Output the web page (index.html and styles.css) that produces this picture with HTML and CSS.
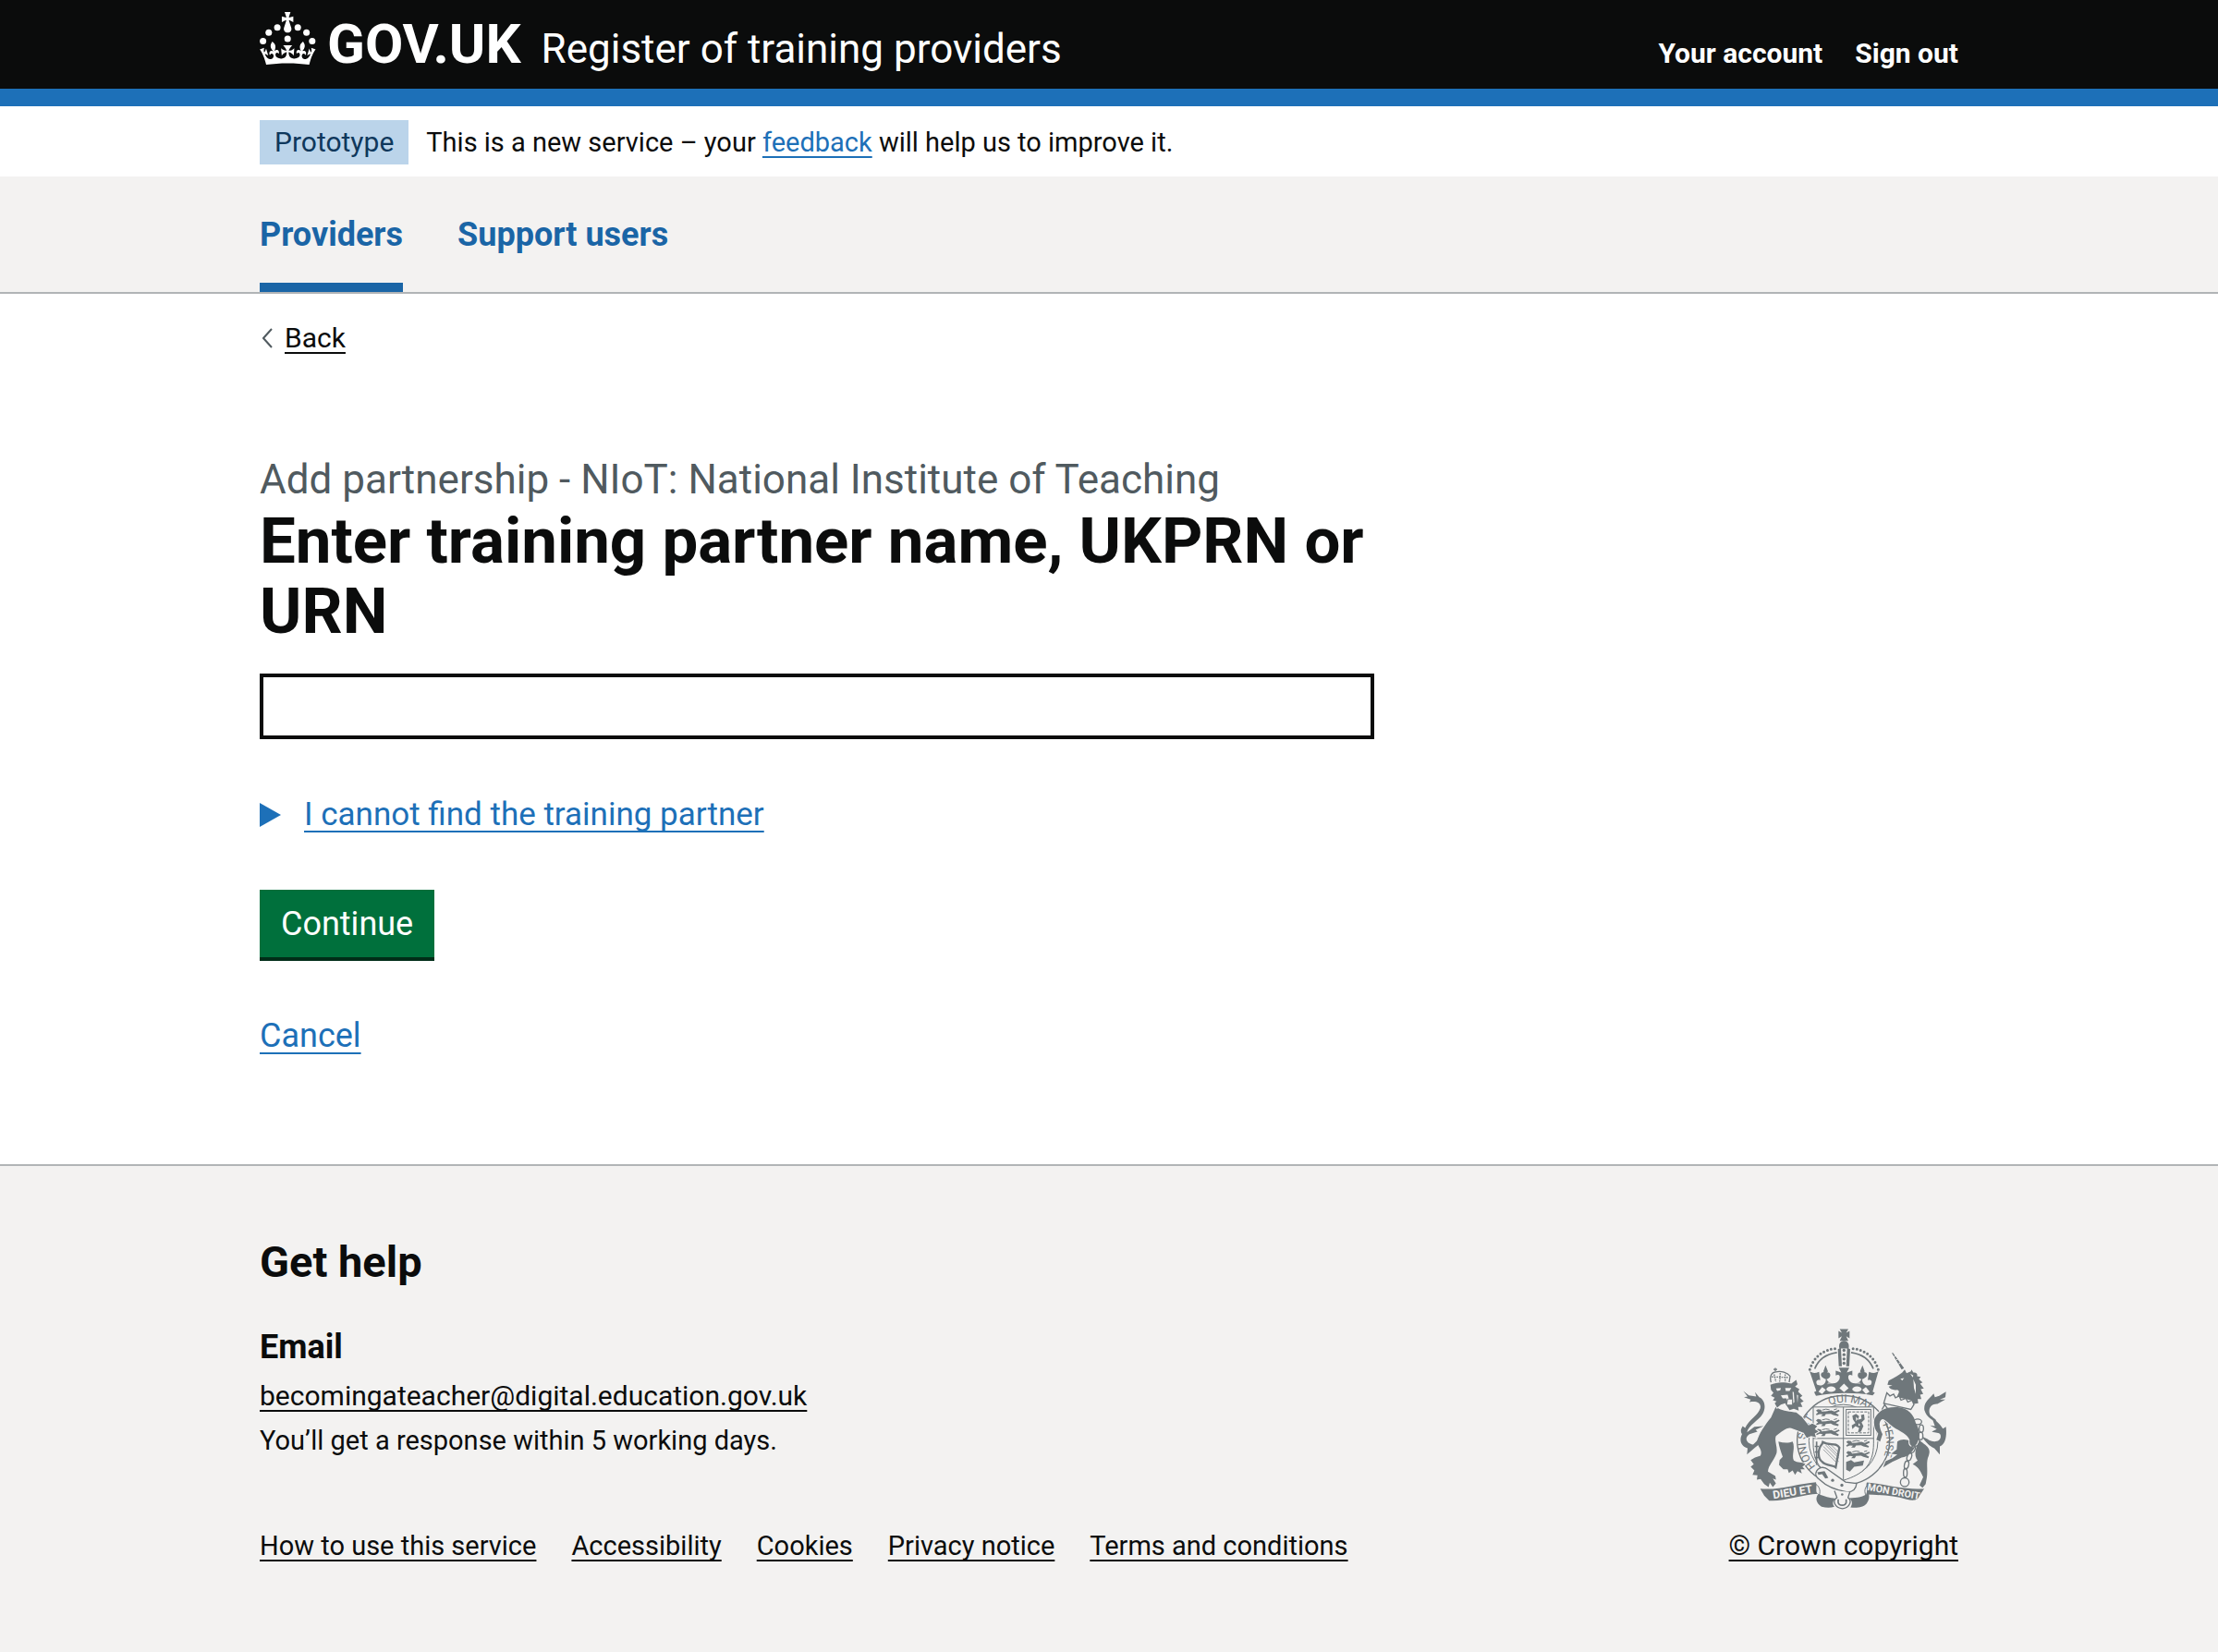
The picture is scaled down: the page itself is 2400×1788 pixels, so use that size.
FILE: index.html
```
<!DOCTYPE html>
<html lang="en">
<head>
<meta charset="utf-8">
<meta name="viewport" content="width=device-width, initial-scale=1">
<title>Enter training partner name, UKPRN or URN - Register of training providers - GOV.UK</title>
<link rel="stylesheet" href="styles.css">
</head>
<body>
<header class="header">
  <div class="container header-row">
    <a class="brand" href="#">
      <svg class="crown" viewBox="0 0 64 60" aria-hidden="true" fill="currentColor">
        <circle cx="20" cy="17.6" r="3.7"/><circle cx="10.2" cy="23.5" r="3.7"/><circle cx="3.7" cy="33.2" r="3.7"/><circle cx="31.7" cy="30.6" r="3.7"/><circle cx="43.3" cy="17.6" r="3.7"/><circle cx="53.2" cy="23.5" r="3.7"/><circle cx="59.7" cy="33.2" r="3.7"/>
        <path d="M33.1,9.8c.2-.1.3-.3.5-.5l4.6,2.4v-6.8l-4.6,1.5c-.1-.2-.3-.3-.5-.5l1.9-5.9h-6.7l1.9,5.9c-.2.1-.3.3-.5.5l-4.6-1.5v6.8l4.6-2.4c.1.2.3.3.5.5l-2.6,8c-.9,2.8,1.2,5.7,4.1,5.7h0c3,0,5.1-2.9,4.1-5.7l-2.6-8ZM37,37.9s-3.4,3.8-4.1,6.1c2.2,0,4.2-.5,6.4-2.8l-.7,8.5c-2-2.8-4.4-4.1-5.7-3.8.1,3.1.5,6.7,5.8,7.2,3.7.3,6.7-1.5,7-3.8.4-2.6-2-4.3-3.7-1.6-1.4-4.5,2.4-6.1,4.9-3.2-1.9-4.5-1.8-7.7,2.4-10.9,3,4,2.6,7.3-1.2,11.1,2.4-1.3,6.2,0,4,4.6-1.2-2.8-3.7-2.2-4.2.2-.3,1.7.7,3.7,3,4.2,1.9.3,4.7-.9,7-5.9-1.3,0-2.4.7-3.9,1.7l2.4-8c.6,2.3,1.4,3.7,2.2,4.5.6-1.6.5-2.8,0-5.3l5,1.8c-2.6,3.6-5.2,8.7-7.3,17.5-7.4-1.1-15.7-1.7-24.5-1.7h0c-8.8,0-17.1.6-24.5,1.7-2.1-8.9-4.7-13.9-7.3-17.5l5-1.8c-.5,2.5-.6,3.7,0,5.3.8-.8,1.6-2.3,2.2-4.5l2.4,8c-1.5-1-2.6-1.7-3.9-1.7,2.3,5,5.2,6.2,7,5.9,2.3-.4,3.3-2.4,3-4.2-.5-2.4-3-3.1-4.2-.2-2.2-4.6,1.6-6,4-4.6-3.7-3.7-4.2-7.1-1.2-11.1,4.2,3.2,4.3,6.4,2.4,10.9,2.5-2.8,6.3-1.3,4.9,3.2-1.8-2.7-4.1-1-3.7,1.6.3,2.3,3.3,4.1,7,3.8,5.4-.5,5.7-4.2,5.8-7.2-1.3-.2-3.7,1-5.7,3.8l-.7-8.5c2.2,2.3,4.2,2.7,6.4,2.8-.7-2.3-4.1-6.1-4.1-6.1h10.6,0Z"/>
      </svg>
      <span class="wordmark">GOV.UK</span>
      <span class="service">Register of training providers</span>
    </a>
    <nav class="account" aria-label="Account">
      <a href="#">Your account</a>
      <a href="#">Sign out</a>
    </nav>
  </div>
</header>

<div class="container phase">
  <strong class="tag">Prototype</strong>
  <span class="phase-text">This is a new service – your <a class="link" href="#">feedback</a> will help us to improve it.</span>
</div>

<nav class="service-nav" aria-label="Service">
  <div class="container service-nav-row">
    <a class="nav-link nav-link-active" href="#" aria-current="page">Providers</a>
    <a class="nav-link" href="#">Support users</a>
  </div>
</nav>

<div class="container content">
  <a class="back" href="#"><svg class="back-arrow" viewBox="0 0 11 22" aria-hidden="true"><path d="M10 1 1 11l9 10" fill="none" stroke="currentColor" stroke-width="2"/></svg><span class="back-text">Back</span></a>
  <main class="main">
    <form class="form" action="#">
      <span class="caption">Add partnership - NIoT: National Institute of Teaching</span>
      <h1 class="title"><label for="partner">Enter training partner name, UKPRN or URN</label></h1>
      <input class="input" id="partner" name="partner" type="text" autocomplete="off">
      <details class="details">
        <summary class="summary"><span class="summary-text">I cannot find the training partner</span></summary>
        <p class="details-text">Contact support if the training partner is not listed.</p>
      </details>
      <button class="button" type="submit">Continue</button>
      <p class="cancel"><a class="link" href="#">Cancel</a></p>
    </form>
  </main>
</div>

<footer class="footer">
  <div class="container footer-row">
    <div class="footer-main">
      <h2 class="footer-title">Get help</h2>
      <h3 class="footer-subtitle">Email</h3>
      <ul class="footer-list">
        <li class="footer-email"><a class="footer-link" href="#">becomingateacher@digital.education.gov.uk</a></li>
        <li>You’ll get a response within 5 working days.</li>
      </ul>
      <ul class="footer-links">
        <li><a class="footer-link" href="#">How to use this service</a></li>
        <li><a class="footer-link" href="#">Accessibility</a></li>
        <li><a class="footer-link" href="#">Cookies</a></li>
        <li><a class="footer-link" href="#">Privacy notice</a></li>
        <li><a class="footer-link" href="#">Terms and conditions</a></li>
      </ul>
    </div>
    <div class="copyright">
      <svg class="arms" viewBox="130 55 672 590" aria-hidden="true" fill="currentColor">
        <defs>
          <path id="ring-left" d="M375 505A124 122 0 0 1 402 318"/>
          <path id="ring-top" d="M420 306A140 140 0 0 1 560 330"/>
          <path id="ring-right" d="M575 345A124 122 0 0 1 500 545"/>
          <g id="passant"><path d="M2 6 8 1 18 3 21 9 34 8 52 5 62 9 76 3 79 7 66 14 76 19 74 24 58 20 50 16 34 17 30 24 18 24 24 18 14 17 4 21 2 17 9 12Z"/><path d="M22 4 34 1 46 3M60 3 70 0" fill="none" stroke="currentColor" stroke-width="3"/></g>
        </defs>

        <!-- crown -->
        <path d="M453 59H481L474 71 485 65V89L474 82 481 97H453L460 82 449 89V65L460 71Z"/>
        <path d="M452 122C448 104 458 97 467 97S486 104 482 122L487 124 484 180H474L477 122H457L460 180H450L447 124Z"/>
        <g><circle cx="467" cy="128" r="5"/><circle cx="467" cy="142" r="5"/><circle cx="467" cy="156" r="5"/><circle cx="467" cy="170" r="5"/></g>
        <path d="M356 190C368 150 400 124 444 122M578 190C566 150 534 124 490 122" fill="none" stroke="currentColor" stroke-width="9" stroke-linecap="round" stroke-dasharray="0 12.5"/>
        <path d="M372 188C384 156 410 140 444 135M562 188C550 156 524 140 490 135" fill="none" stroke="currentColor" stroke-width="5"/>
        <path d="M355 195C362 202 372 204 386 198L390 225C378 222 374 230 380 240C394 246 408 240 408 222C392 216 388 206 396 200C404 196 408 200 408 206L400 196 407 177 415 196 408 206C410 198 420 198 422 206C424 214 418 220 410 222C420 240 444 240 452 222C456 210 450 204 440 210V194L458 200 450 184H484L476 200 494 194V210C484 204 478 210 482 222C490 240 514 240 524 222C516 220 510 214 512 206C514 198 524 198 526 206L519 196 527 177 534 196 526 206C526 200 530 196 538 200C546 206 542 216 526 222C526 240 540 246 554 240C560 230 556 222 544 225L548 198C562 204 572 202 579 195L560 262 567 266 560 274C500 264 434 264 376 276L370 264 377 260Z"/>
        <g class="arms-cut">
          <path d="M467 236 482 251 467 264 452 251ZM396 247 408 256 396 270 384 262ZM538 247 550 262 538 270 526 256Z"/>
          <ellipse cx="425" cy="254" rx="15" ry="9"/><ellipse cx="509" cy="254" rx="15" ry="9"/>
          <path d="M412 238 430 205 440 226 430 236ZM522 238 504 205 494 226 504 236Z" opacity=".45"/>
        </g>

        <!-- garter -->
        <ellipse class="arms-paper" cx="465" cy="420" rx="150" ry="145" stroke="currentColor" stroke-width="4"/>
        <ellipse cx="465" cy="422" rx="112" ry="118" fill="none" stroke="currentColor" stroke-width="3"/>
        <g class="arms-motto">
          <text font-size="36"><textPath href="#ring-left">HONI SOIT</textPath></text>
          <text font-size="36"><textPath href="#ring-top">QUI MAL</textPath></text>
          <text font-size="34"><textPath href="#ring-right">Y PENSE</textPath></text>
        </g>

        <!-- shield -->
        <path class="arms-paper" d="M367 312H563V430C563 500 530 530 465 550C400 530 367 500 367 430Z"/>
        <g fill="none" stroke="currentColor" stroke-width="3">
          <path d="M367 312H563V430C563 500 530 530 465 550C400 530 367 500 367 430Z"/>
          <path d="M465 312V548M367 414H563"/>
          <rect x="474" y="320" width="80" height="84"/><rect x="481" y="328" width="66" height="68" stroke-dasharray="9 4"/>
          <path d="M400 440 450 490M400 450 440 490M408 436 450 478M416 436 450 470M424 434 450 460" stroke-width="2"/>
          <path d="M396 432C380 450 382 480 396 490C410 504 430 500 440 508L452 444C440 424 420 440 398 426Z" stroke-width="7"/>
          <path d="M378 424V500M372 440H386M372 458H386M372 476H386M392 512 420 520" stroke-width="5"/>
        </g>
        <use href="#passant" x="374" y="318"/><use href="#passant" x="374" y="350"/><use href="#passant" x="374" y="382"/>
        <use href="#passant" x="472" y="420"/><use href="#passant" x="472" y="454"/>
        <path d="M474 490 490 484 500 492 532 486 528 502 500 506 486 522 474 516Z"/>
        <path d="M494 340 506 334 516 342 512 354 524 350 522 338 532 336 534 352 524 362 530 374 522 392 512 394 516 380 504 374 494 384 492 372 504 364 496 352Z"/>
        <path class="arms-cut" d="M506 344 512 350 506 358ZM514 364 520 370 514 374Z"/>

        <!-- belt and buckle -->
        <g class="arms-paper" stroke="currentColor" stroke-width="4">
          <path d="M378 520C388 504 404 506 416 516L472 556 508 560C506 578 496 588 478 588C440 582 410 570 388 548C376 540 372 530 378 520Z"/>
          <path d="M436 584 444 606C428 616 436 640 462 642C486 640 494 616 480 606L486 588"/>
        </g>
        <g><circle cx="430" cy="550" r="5"/><circle cx="460" cy="566" r="5"/><circle cx="461" cy="596" r="4"/><path d="M380 524 404 520 416 542 406 544 396 530 384 532Z"/></g>
        <path d="M448 612V622C450 634 472 634 474 622V612" fill="none" stroke="currentColor" stroke-width="5"/>

        <!-- ribbon -->
        <path d="M195 577C250 584 320 560 376 556C380 574 372 590 384 594C330 596 270 620 224 616L208 600Z"/>
        <path d="M541 557C600 562 660 582 727 577L712 600C706 618 690 616 670 612C630 600 590 598 538 596C546 584 536 570 541 557Z"/>
        <path d="M384 594C374 606 374 622 394 636C410 640 424 640 436 636C428 626 430 616 440 610C420 606 404 604 384 594ZM546 590C530 606 510 606 484 608C496 618 494 628 488 638C510 640 530 638 540 626C550 612 550 602 546 590Z"/>
        <path d="M374 562C390 570 392 590 384 604M548 562C532 572 532 590 540 602" fill="none" stroke="currentColor" stroke-width="3"/>
        <g class="arms-scroll">
          <text x="238" y="610" font-size="36" transform="rotate(-9 238 610)">DIEU ET</text>
          <text x="541" y="582" font-size="32" transform="rotate(10 541 582)">MON DROIT</text>
        </g>

        <!-- lion -->
        <path d="M244 185V196M238 190H250M230 232C224 210 234 198 246 198C262 194 284 200 292 212L288 238" fill="none" stroke="currentColor" stroke-width="4"/>
        <path d="M232 214 288 216M240 206 246 230M260 202 258 232M276 206 276 232" fill="none" stroke="currentColor" stroke-width="4" stroke-dasharray="5 3"/>
        <g class="arms-beast">
          <path d="M254 424C270 428 286 430 300 424C310 444 296 468 304 486C316 494 330 490 342 498L332 506 340 514 326 514 330 528 316 520 308 532 300 518 288 526 284 514 270 514 256 500 258 484 268 474C262 456 256 440 254 424Z"/>
          <path d="M246 310C262 326 290 326 312 330L330 344 352 372 364 366 380 374 372 384 384 392 372 398 376 410 360 406 346 412 336 396 300 382C284 374 264 392 246 406C240 424 252 440 248 462C238 490 222 500 220 522L244 536 246 548 236 544 246 560 236 572 226 558 222 572 208 562 196 546 184 548 186 534 170 532 176 518 164 506 174 498 164 484 178 476 196 470C204 450 186 440 184 424C190 400 210 370 230 346Z"/>
          <path d="M228 240C250 230 270 230 296 236L312 224 316 238 308 246 322 254 318 262 332 276 324 282 336 294 326 298 332 312 318 312 320 324 304 318 290 322 276 300 262 304 250 314 242 300 248 294 236 290 242 282 230 276 238 266 230 256Z"/>
        </g>
        <path class="arms-cut" d="M246 252 262 250 260 258 250 260ZM276 250 296 250 290 260 278 260ZM262 274 284 272 290 292 286 302 280 284 268 284ZM300 262 304 264 306 296 302 300ZM314 272 318 274 316 300Z"/>
        <path class="arms-paper" d="M284 286H300V306H280Z" stroke="currentColor" stroke-width="3"/>
        <path d="M140 260 158 274 182 278 178 264 192 280C212 290 214 316 202 336C190 356 156 372 152 394L176 376 206 374 180 386 186 392 160 400C142 412 150 430 172 434L194 412 198 428 178 444 152 466 154 446C132 438 126 420 136 400C130 392 132 384 138 374L146 380C158 352 196 334 196 310C194 296 180 292 160 296L164 288 142 280 154 278Z"/>

        <!-- unicorn -->
        <path d="M622 136 626 136 662 186 654 190Z"/>
        <path class="arms-notch" d="M628 150 636 144M636 160 644 154M644 172 652 166"/>
        <g class="arms-beast">
          <path d="M640 424C660 410 686 420 700 438C690 456 676 476 654 476C636 484 614 494 594 508L602 488 624 478 640 466 620 464 638 450Z"/>
          <path d="M712 420C730 436 752 444 742 470C732 490 740 512 736 540L732 562 722 574 712 566 724 540C716 522 710 508 690 498L706 486C692 470 700 440 712 420Z"/>
          <path d="M566 350C580 322 606 308 650 314C680 320 694 340 700 364C716 390 714 410 704 430C696 446 676 440 680 420C674 400 650 392 626 376C606 362 600 350 590 352C576 360 584 386 592 400L584 424 572 418 578 398C566 386 562 366 566 350Z"/>
          <path d="M612 226C630 218 646 208 656 200L664 190 670 202 684 196 686 190 692 200C704 200 706 206 704 212L716 214 710 222 722 232 714 236 726 252 716 254 724 270 714 272 718 286 706 286 708 300 694 302 684 290 640 280C640 268 652 262 640 256C628 258 618 256 612 246L624 242 608 240Z"/>
        </g>
        <path class="arms-cut" d="M650 220 662 218 656 226ZM692 222 700 240 700 270 694 250ZM682 204 692 210 690 216Z"/>
        <path class="arms-paper" d="M606 266 616 276 628 270 634 282 646 276 652 290 668 284 674 296 688 290 694 304 684 320 596 300ZM590 320 602 300M596 300 610 320" stroke="currentColor" stroke-width="4"/>
        <path d="M798 262 796 280 778 288 796 288 770 302C750 300 736 320 748 340L764 352 770 364C756 356 734 344 728 322C724 296 746 284 758 268L762 280 776 276ZM750 340C768 360 778 366 788 382L798 376C800 400 800 430 778 440L778 466 760 446C744 440 730 424 720 408L738 416C756 430 786 426 780 402C776 394 764 396 752 392L768 384 746 372 762 374Z"/>
        <g class="arms-chain"><ellipse cx="706" cy="360" rx="13" ry="9"/><ellipse cx="718" cy="382" rx="7" ry="12"/><ellipse cx="716" cy="406" rx="7" ry="12"/><ellipse cx="704" cy="428" rx="7" ry="12" transform="rotate(30 704 428)"/><ellipse cx="690" cy="450" rx="7" ry="12" transform="rotate(25 690 450)"/><ellipse cx="679" cy="474" rx="7" ry="13" transform="rotate(20 679 474)"/><ellipse cx="670" cy="500" rx="7" ry="13" transform="rotate(12 670 500)"/><ellipse cx="666" cy="526" rx="6" ry="14"/><circle cx="664" cy="556" r="14"/></g>
      </svg>
      <a class="footer-link" href="#">© Crown copyright</a>
    </div>
  </div>
</footer>
</body>
</html>
```
FILE: styles.css
```
:root {
  --ink: #0b0c0c;
  --blue: #1d70b8;
  --blue-nav: #1a65a6;
  --grey: #f3f2f1;
  --rule: #b1b4b6;
  --secondary: #505a5f;
}

* { box-sizing: border-box; }

body {
  margin: 0;
  min-height: 100vh;
  display: flex;
  flex-direction: column;
  background: #fff;
  color: var(--ink);
  font-family: Roboto, "Liberation Sans", sans-serif;
  font-size: 36px;
  line-height: 48px;
}

h1, h2, h3, p, ul { margin: 0; padding: 0; }
ul { list-style: none; }
a {
  text-decoration-thickness: 2px;
  text-underline-offset: 5px;
  text-decoration-skip-ink: none;
}

.container {
  width: calc(100% - 58px);
  max-width: 1838px;
  margin: 0 auto;
}

.link { color: var(--blue); }

/* Header */
.header {
  background: var(--ink);
  color: #fff;
  border-bottom: 19px solid var(--blue);
}
.header-row {
  display: flex;
  justify-content: space-between;
  align-items: baseline;
}
.header a { color: #fff; text-decoration: none; }
.brand { display: flex; align-items: baseline; }
.crown {
  width: 61px;
  height: 57px;
  align-self: flex-start;
  margin: 13px 12px 0 0;
}
.wordmark { font-size: 60px; font-weight: 700; line-height: 96px; }
.service { margin-left: 22px; font-size: 44px; }
.account {
  display: flex;
  gap: 35px;
  font-size: 30px;
  font-weight: 700;
}

/* Phase banner */
.phase {
  display: flex;
  align-items: flex-start;
  gap: 19px;
  padding: 15px 0 13px;
  font-size: 29px;
}
.tag {
  padding: 0 16px;
  background: #bbd4ea;
  color: #0f385c;
  font-size: 30px;
  font-weight: 400;
}

/* Service navigation */
.service-nav {
  background: var(--grey);
  border-bottom: 2px solid var(--rule);
}
.service-nav-row { display: flex; gap: 59px; }
.nav-link {
  padding: 39px 0 28px;
  border-bottom: 10px solid transparent;
  color: var(--blue-nav);
  font-weight: 700;
  text-decoration: none;
}
.nav-link-active { border-bottom-color: var(--blue-nav); }

/* Content */
.content { padding: 29px 0 115px; }
.back {
  display: flex;
  align-items: center;
  gap: 13px;
  width: fit-content;
  padding-left: 3px;
  color: var(--ink);
  font-size: 30px;
  line-height: 38px;
  text-decoration: none;
}
.back-arrow { width: 11px; height: 22px; color: var(--secondary); }
.back-text {
  text-decoration: underline 2px;
  text-underline-offset: 5px;
}
.main { padding-top: 105px; }
.form { width: calc(66.66% - 19px); }
.caption {
  display: block;
  color: var(--secondary);
  font-size: 44px;
  line-height: 58px;
}
.title { font-size: 69px; line-height: 76px; }
.input {
  display: block;
  width: 100%;
  height: 71px;
  margin-top: 29px;
  padding: 8px;
  border: 4px solid var(--ink);
  border-radius: 0;
  background: #fff;
  color: var(--ink);
  font: inherit;
}
.details { margin-top: 58px; }
.summary {
  display: flex;
  align-items: center;
  gap: 25px;
  width: fit-content;
  color: var(--blue);
  font-size: 35px;
  cursor: pointer;
  list-style: none;
}
.summary::before {
  content: "";
  width: 23px;
  height: 26px;
  background: currentColor;
  clip-path: polygon(0 0, 100% 50%, 0 100%);
}
.summary-text {
  text-decoration: underline 2px;
  text-underline-offset: 6px;
  text-decoration-skip-ink: none;
}
.details-text { padding: 20px 48px; }
.button {
  display: block;
  margin-top: 57px;
  padding: 13px 23px 12px;
  border: 0;
  border-radius: 0;
  background: #00703c;
  box-shadow: 0 4px 0 #002d18;
  color: #fff;
  font: inherit;
}
.cancel { margin-top: 61px; }
.cancel .link { text-underline-offset: 6px; }

/* Footer */
.footer {
  flex: 1;
  padding: 75px 0 91px;
  border-top: 2px solid var(--rule);
  background: var(--grey);
  font-size: 29px;
}
.footer-row {
  display: flex;
  justify-content: space-between;
  align-items: flex-end;
}
.footer-title { font-size: 47px; line-height: 58px; }
.footer-subtitle { margin: 39px 0 5px; font-size: 36px; }
.footer-email { font-size: 30px; }
.footer-links {
  display: flex;
  flex-wrap: wrap;
  gap: 0 38px;
  margin-top: 66px;
}
.footer-link { color: var(--ink); }
.copyright {
  display: flex;
  flex-direction: column;
  align-items: center;
  gap: 15px;
  font-size: 30px;
}
.arms { width: 224px; height: 197px; color: #6f777b; }
.arms-cut, .arms-paper { fill: var(--grey); }
.arms-notch { stroke: var(--grey); stroke-width: 3px; }
.arms-beast { stroke: var(--grey); stroke-width: 6px; paint-order: stroke; }
.arms-scroll { fill: var(--grey); font-weight: 700; }
.arms-chain { fill: none; stroke: #6f777b; stroke-width: 4px; }
```
